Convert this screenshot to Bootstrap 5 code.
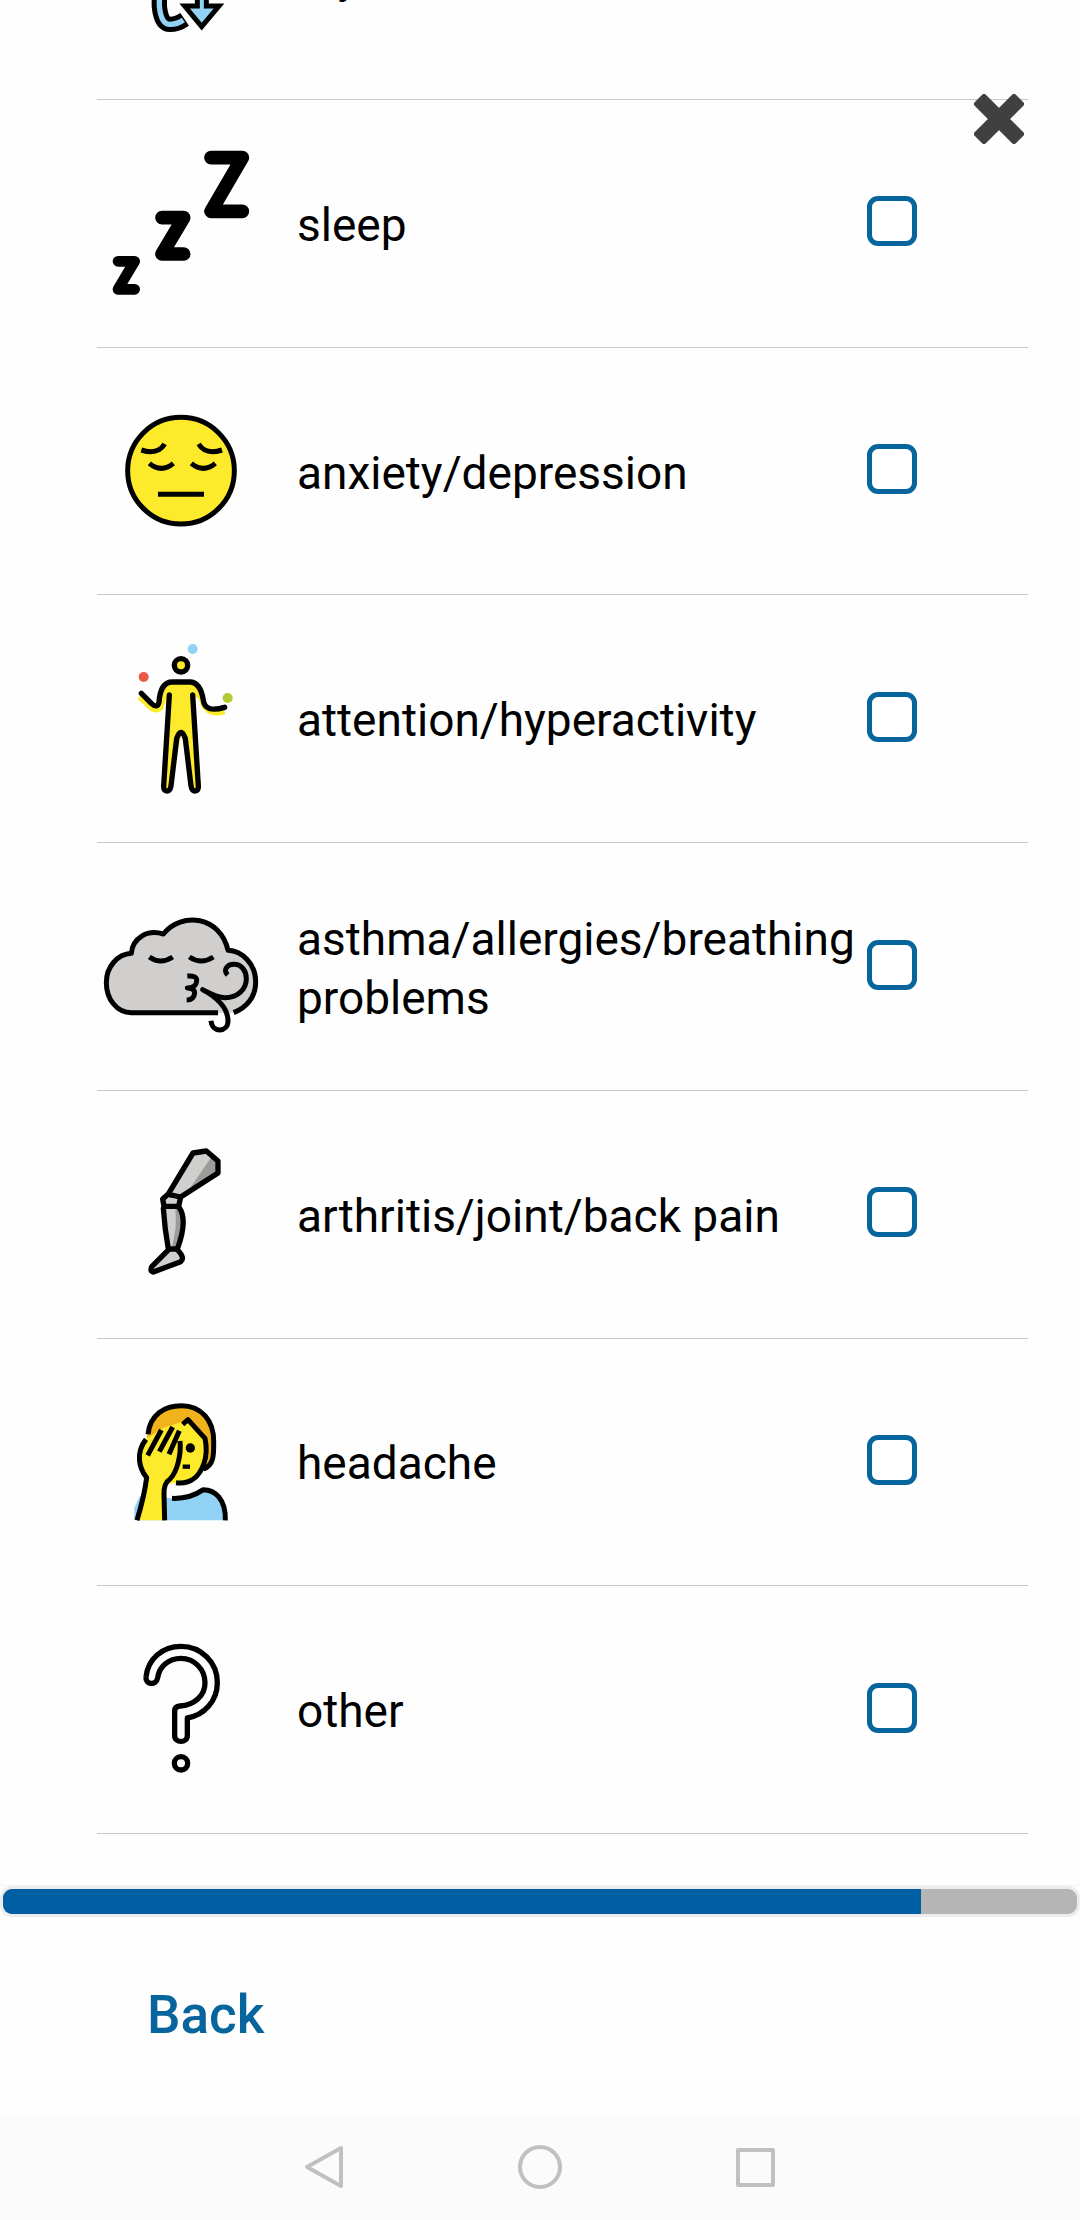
<!DOCTYPE html>
<html lang="en">
<head>
<meta charset="utf-8">
<meta name="viewport" content="width=device-width, initial-scale=1">
<title>Health conditions</title>
<link href="https://cdn.jsdelivr.net/npm/bootstrap@5.3.0/dist/css/bootstrap.min.css" rel="stylesheet">
<style>
  body { font-family: Roboto, "Liberation Sans", sans-serif; color: #000; background: #fefefe; }
  .condition-list { padding: 0 52px 0 97px; margin-bottom: 51px; overflow: hidden; }
  .condition { flex: 1 1 0; border-bottom: 1px solid #c9c9c9; }
  .condition-cut { flex: 0 0 100px; height: 100px; align-items: flex-end !important; }
  .condition-cut .condition-row { height: 248px; flex-shrink: 0; }
  .condition-row { width: 100%; }
  .condition-icon { width: 168px; height: 168px; margin-right: 32px; flex: none; }
  .condition-label { font-size: 46px; line-height: 59px; padding-top: 4px; }
  .form-check-input.tick { width: 50px; height: 50px; margin: 0 111px 4px 0; border: 5px solid #06659c; border-radius: 11px; flex: none; background-color: #fff; }
  .form-check-input.tick:checked { background-color: #06659c; }
  .close-btn { top: 94px; right: 56px; line-height: 0; }
  .survey-progress { height: 31px; border: 3px solid #ececec; border-radius: 12px; background: #b5b5b5; }
  .survey-progress .progress-bar { background: #005fa3; }
  .progress-wrap { border-top: 1px solid #f6f6f6; }
  .actions { height: 197px; padding: 0 147px 2px; }
  .back-btn { font-size: 53px; line-height: 64px; font-weight: 500; color: #06659c; }
  .sys-nav { height: 106px; background: #fbfbfb; padding: 0 216px; }
  .ink { fill: none; stroke: #000; stroke-width: 16; stroke-linecap: round; stroke-linejoin: round; }
  .ink-flat { stroke-width: 15; stroke-linecap: butt; }
  .ink-large { stroke-width: 41; }
  .ink-medium { stroke-width: 32; }
</style>
</head>
<body>
<div class="d-flex flex-column vh-100">
  <main class="d-flex flex-column flex-grow-1 condition-list">
    <div class="condition condition-cut d-flex overflow-hidden">
      <div class="condition-row d-flex align-items-center">
        <svg class="condition-icon" viewBox="21 -325 504 504" aria-hidden="true">
          <path d="M208-100V20Q213 75 240 75Q262 75 284 60" fill="none" stroke="#000" stroke-width="46"/>
          <path d="M208-100V20Q213 75 240 75Q262 75 280 62" fill="none" stroke="#92d3f5" stroke-width="16"/>
          <path d="M322-100V20H284L335 82L387 20H349V-100Z" fill="#92d3f5" stroke="#000" stroke-width="15"/>
        </svg>
        <label class="condition-label flex-grow-1" for="c0">thyroid</label>
        <input class="form-check-input tick" type="checkbox" id="c0">
      </div>
    </div>
    <div class="condition d-flex">
      <div class="condition-row d-flex align-items-center">
        <svg class="condition-icon" viewBox="21 417 504 504" aria-hidden="true">
          <path class="ink ink-large" d="M363 473H457L363 634H457"/>
          <path class="ink ink-large" d="M216 653H281L216 762H281"/>
          <path class="ink ink-medium" d="M84 784H134L84 868H134"/>
        </svg>
        <label class="condition-label flex-grow-1" for="c1">sleep</label>
        <input class="form-check-input tick" type="checkbox" id="c1">
      </div>
    </div>
    <div class="condition d-flex">
      <div class="condition-row d-flex align-items-center">
        <svg class="condition-icon" viewBox="21 21 504 504" aria-hidden="true">
          <circle cx="273" cy="272" r="160" fill="#fcea2b" stroke="#000" stroke-width="15"/>
          <path class="ink ink-flat" d="M154 210Q203 226 224 192M326 192Q347 226 396 210M178 250Q214 280 250 250M304 250Q340 280 376 250M204 343H342"/>
        </svg>
        <label class="condition-label flex-grow-1" for="c2">anxiety/depression</label>
        <input class="form-check-input tick" type="checkbox" id="c2">
      </div>
    </div>
    <div class="condition d-flex">
      <div class="condition-row d-flex align-items-center">
        <svg class="condition-icon" viewBox="21 42 504 504" aria-hidden="true">
          <path fill="none" stroke="#fcea2b" stroke-width="16" d="M148 228L178 256Q196 274 212 260L226 215M332 215Q338 290 404 272"/>
          <path fill="#fcea2b" d="M208 252Q210 184 245 184H304Q336 190 342 250L308 218L320 505H306L274 338L242 505H224L238 218Z"/>
          <circle cx="273" cy="133" r="20" fill="#fcea2b" stroke="#000" stroke-width="16"/>
          <path class="ink" d="M154 217L184 247Q202 264 207 244Q211 183 247 183H302Q332 186 340 238Q344 276 404 259"/>
          <path class="ink" d="M238 222L221 495Q220 510 231 510Q240 510 243 495L260 353Q266 334 273 334Q280 334 286 353L303 495Q306 510 315 510Q326 510 325 495L308 222"/>
          <circle cx="308" cy="84" r="15" fill="#92d3f5"/><circle cx="161" cy="168" r="15" fill="#ea5a47"/><circle cx="413" cy="231" r="15" fill="#b1cc33"/>
        </svg>
        <label class="condition-label flex-grow-1" for="c3">attention/hyperactivity</label>
        <input class="form-check-input tick" type="checkbox" id="c3">
      </div>
    </div>
    <div class="condition d-flex">
      <div class="condition-row d-flex align-items-center">
        <svg class="condition-icon" viewBox="21 -22 504 504" aria-hidden="true">
          <path fill="#d0cfce" d="M124 367C80 367 49 326 49 277C49 228 83 192 124 189C127 145 170 116 220 131C275 62 392 78 414 180C456 182 497 220 497 275C497 320 470 352 433 367Z"/>
          <path class="ink ink-flat" d="M384 367H124C80 367 49 326 49 277C49 228 83 192 124 189C127 145 170 116 220 131C275 62 392 78 414 180C456 182 497 220 497 275C497 320 470 352 431 367"/>
          <path class="ink ink-flat" d="M178 200Q212 224 248 200M298 200Q334 224 370 200M292 257Q322 255 320 272Q319 292 292 293Q314 294 314 308Q312 329 290 329"/>
          <path class="ink ink-flat" d="M413 254C398 238 412 222 432 222C455 222 469 242 469 265C469 298 441 322 405 322C380 322 360 309 338 298C378 320 414 352 414 392C414 426 367 430 363 391"/>
        </svg>
        <label class="condition-label flex-grow-1" for="c4">asthma/allergies/breathing<br>problems</label>
        <input class="form-check-input tick" type="checkbox" id="c4">
      </div>
    </div>
    <div class="condition d-flex">
      <div class="condition-row d-flex align-items-center">
        <svg class="condition-icon" viewBox="21 29 504 504" aria-hidden="true">
          <path fill="#d0cfce" d="M236 219L309 98L349 92L384 122V158L272 228L268 260Q288 300 262 382L280 412L272 424L186 455V440L234 388L220 262L218 236Z"/>
          <path fill="#9b9b9a" d="M366 108L384 122V158L290 218ZM262 266Q286 305 261 380L246 382Q262 320 256 266Z"/>
          <path class="ink" d="M236 219L309 98L349 92L384 122V158L272 230L234 222L218 236L222 258H266L272 230M220 264Q224 325 235 386H262Q294 300 268 262M236 388L186 438Q178 453 190 455L272 424Q286 413 263 389"/>
        </svg>
        <label class="condition-label flex-grow-1" for="c5">arthritis/joint/back pain</label>
        <input class="form-check-input tick" type="checkbox" id="c5">
      </div>
    </div>
    <div class="condition d-flex">
      <div class="condition-row d-flex align-items-center">
        <svg class="condition-icon" viewBox="21 -9 504 504" aria-hidden="true">
          <path fill="#92d3f5" d="M133 418V380L150 345L250 352Q300 355 340 326Q406 334 408 418Z"/>
          <path fill="#f1b31c" d="M170 190Q168 75 274 75Q370 80 371 185Q374 250 348 270L200 200Z"/>
          <path fill="#fcea2b" d="M142 418L170 290Q125 225 164 176L220 140L290 118L347 180Q356 225 340 260Q312 310 250 306L224 312V418Z"/>
          <path class="ink ink-flat" d="M174 160C180 100 225 74 274 74C335 74 372 120 371 182C372 225 370 254 340 264M278 130L294 116L345 172Q354 215 341 250C325 292 300 310 258 305M168 175C136 215 147 262 170 290Q163 345 141 418M270 180C274 220 262 272 240 294Q221 306 222 340L224 418M173 223L214 147M208 212L248 138M237 220L268 149M246 352Q300 354 340 326C375 326 408 355 406 418"/>
          <circle cx="301" cy="201" r="14"/><path stroke="#000" stroke-width="13" d="M278 257H300"/>
        </svg>
        <label class="condition-label flex-grow-1" for="c6">headache</label>
        <input class="form-check-input tick" type="checkbox" id="c6">
      </div>
    </div>
    <div class="condition d-flex">
      <div class="condition-row d-flex align-items-center">
        <svg class="condition-icon" viewBox="21 15 504 504" aria-hidden="true">
          <path class="ink" d="M168 168C174 113 218 76 273 76C334 76 382 124 382 185C382 239 343 283 292 291V344C292 367 254 367 254 344V270Q254 256 270 255C312 253 345 225 345 185C345 145 313 112 273 112C236 112 208 136 203 170C198 196 165 190 168 168Z"/>
          <circle class="ink" cx="273" cy="427" r="20"/>
        </svg>
        <label class="condition-label flex-grow-1" for="c7">other</label>
        <input class="form-check-input tick" type="checkbox" id="c7">
      </div>
    </div>
  </main>
  <button type="button" class="btn p-0 border-0 position-fixed close-btn" aria-label="Close">
    <svg width="50" height="50" viewBox="0 0 50 50" aria-hidden="true"><path fill="#404040" stroke="#404040" stroke-width="6" stroke-linejoin="round" d="M10 3L25 18L40 3L47 10L32 25L47 40L40 47L25 32L10 47L3 40L18 25L3 10Z"/></svg>
  </button>
  <div class="progress-wrap">
    <div class="progress survey-progress" role="progressbar" aria-label="Survey progress" aria-valuenow="85" aria-valuemin="0" aria-valuemax="100">
      <div class="progress-bar" style="width:85.5%"></div>
    </div>
  </div>
  <div class="actions d-flex align-items-center">
    <button type="button" class="btn p-0 border-0 back-btn">Back</button>
  </div>
  <nav class="sys-nav d-flex align-items-center justify-content-around" aria-label="System">
    <button type="button" class="btn p-0 border-0 lh-1" aria-label="Back"><svg width="44" height="44" viewBox="0 0 44 44" fill="none" stroke="#c0c0c0" stroke-width="4" stroke-linejoin="round"><path d="M5 22L39 3V41Z"/></svg></button>
    <button type="button" class="btn p-0 border-0 lh-1" aria-label="Home"><svg width="44" height="44" viewBox="0 0 44 44" fill="none" stroke="#c0c0c0" stroke-width="4"><circle cx="22" cy="22" r="20"/></svg></button>
    <button type="button" class="btn p-0 border-0 lh-1" aria-label="Recents"><svg width="44" height="44" viewBox="0 0 44 44" fill="none" stroke="#c0c0c0" stroke-width="4" stroke-linejoin="round"><path d="M4 5H39V40H4Z"/></svg></button>
  </nav>
</div>
<script src="https://cdn.jsdelivr.net/npm/bootstrap@5.3.0/dist/js/bootstrap.bundle.min.js"></script>
</body>
</html>
